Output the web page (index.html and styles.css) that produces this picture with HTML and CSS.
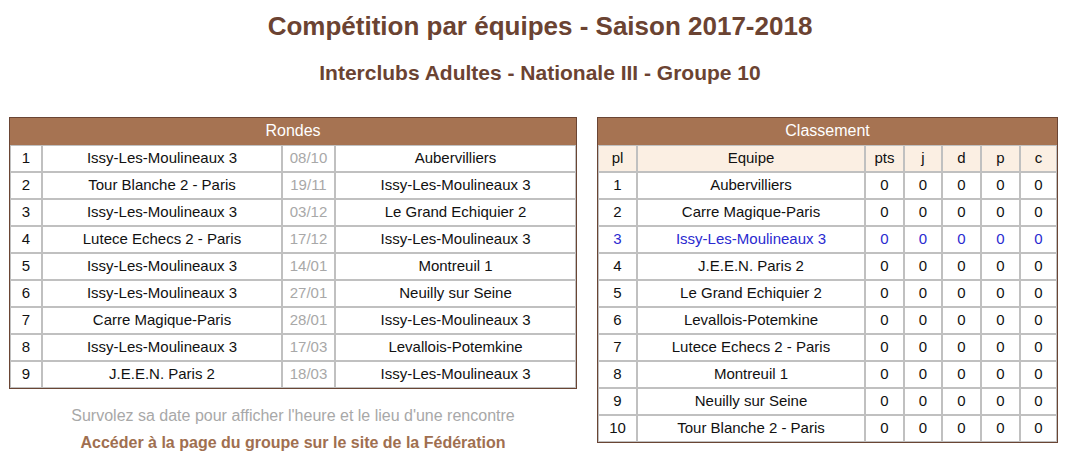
FILE: index.html
```html
<!DOCTYPE html>
<html lang="fr">
<head>
<meta charset="utf-8">
<title>Compétition par équipes</title>
<link rel="stylesheet" href="styles.css">
</head>
<body>
<header class="head">
  <h1 class="title">Compétition par équipes - Saison 2017-2018</h1>
  <h2 class="subtitle">Interclubs Adultes - Nationale III - Groupe 10</h2>
</header>
<main class="layout">
  <section class="col-left">
    <table class="grid rondes">
      <colgroup><col class="c-num"><col class="c-team"><col class="c-date"><col class="c-team2"></colgroup>
      <thead><tr><th colspan="4" class="cap">Rondes</th></tr></thead>
      <tbody>
        <tr><td>1</td><td>Issy-Les-Moulineaux 3</td><td class="date">08/10</td><td>Aubervilliers</td></tr>
        <tr><td>2</td><td>Tour Blanche 2 - Paris</td><td class="date">19/11</td><td>Issy-Les-Moulineaux 3</td></tr>
        <tr><td>3</td><td>Issy-Les-Moulineaux 3</td><td class="date">03/12</td><td>Le Grand Echiquier 2</td></tr>
        <tr><td>4</td><td>Lutece Echecs 2 - Paris</td><td class="date">17/12</td><td>Issy-Les-Moulineaux 3</td></tr>
        <tr><td>5</td><td>Issy-Les-Moulineaux 3</td><td class="date">14/01</td><td>Montreuil 1</td></tr>
        <tr><td>6</td><td>Issy-Les-Moulineaux 3</td><td class="date">27/01</td><td>Neuilly sur Seine</td></tr>
        <tr><td>7</td><td>Carre Magique-Paris</td><td class="date">28/01</td><td>Issy-Les-Moulineaux 3</td></tr>
        <tr><td>8</td><td>Issy-Les-Moulineaux 3</td><td class="date">17/03</td><td>Levallois-Potemkine</td></tr>
        <tr><td>9</td><td>J.E.E.N. Paris 2</td><td class="date">18/03</td><td>Issy-Les-Moulineaux 3</td></tr>
      </tbody>
    </table>
    <p class="hint">Survolez sa date pour afficher l'heure et le lieu d'une rencontre</p>
    <p class="fed">Accéder à la page du groupe sur le site de la Fédération</p>
  </section>
  <section class="col-right">
    <table class="grid classement">
      <colgroup><col class="k-pl"><col class="k-team"><col class="k-pts"><col class="k-j"><col class="k-d"><col class="k-p"><col class="k-c"></colgroup>
      <thead>
        <tr><th colspan="7" class="cap">Classement</th></tr>
        <tr class="sub"><th>pl</th><th>Equipe</th><th>pts</th><th>j</th><th>d</th><th>p</th><th>c</th></tr>
      </thead>
      <tbody>
        <tr><td>1</td><td>Aubervilliers</td><td>0</td><td>0</td><td>0</td><td>0</td><td>0</td></tr>
        <tr><td>2</td><td>Carre Magique-Paris</td><td>0</td><td>0</td><td>0</td><td>0</td><td>0</td></tr>
        <tr class="mine"><td>3</td><td>Issy-Les-Moulineaux 3</td><td>0</td><td>0</td><td>0</td><td>0</td><td>0</td></tr>
        <tr><td>4</td><td>J.E.E.N. Paris 2</td><td>0</td><td>0</td><td>0</td><td>0</td><td>0</td></tr>
        <tr><td>5</td><td>Le Grand Echiquier 2</td><td>0</td><td>0</td><td>0</td><td>0</td><td>0</td></tr>
        <tr><td>6</td><td>Levallois-Potemkine</td><td>0</td><td>0</td><td>0</td><td>0</td><td>0</td></tr>
        <tr><td>7</td><td>Lutece Echecs 2 - Paris</td><td>0</td><td>0</td><td>0</td><td>0</td><td>0</td></tr>
        <tr><td>8</td><td>Montreuil 1</td><td>0</td><td>0</td><td>0</td><td>0</td><td>0</td></tr>
        <tr><td>9</td><td>Neuilly sur Seine</td><td>0</td><td>0</td><td>0</td><td>0</td><td>0</td></tr>
        <tr><td>10</td><td>Tour Blanche 2 - Paris</td><td>0</td><td>0</td><td>0</td><td>0</td><td>0</td></tr>
      </tbody>
    </table>
  </section>
</main>
</body>
</html>
```
FILE: styles.css
```css
* { box-sizing: border-box; }
html, body { margin: 0; padding: 0; background: #fff; }
body {
  font-family: "Liberation Sans", Arial, sans-serif;
  color: #111;
  font-size: 15px;
}
.head {
  padding-left: 10px;
  text-align: center;
  color: #6b4332;
}
.title {
  margin: 0;
  padding-top: 11px;
  font-size: 26px;
  line-height: 30px;
  font-weight: bold;
}
.subtitle {
  margin: 0;
  padding-top: 20px;
  font-size: 21px;
  line-height: 24px;
  font-weight: bold;
}
.layout {
  display: flex;
  align-items: flex-start;
  gap: 20px;
  padding: 0 0 0 9px;
  margin-top: 32px;
}
.col-left { width: 568px; }
.col-right { width: 461px; }
.grid {
  width: 100%;
  table-layout: fixed;
  border-collapse: separate;
  border-spacing: 0;
  border: 1px solid #6a4534;
}
.grid td, .grid th {
  border: 1px solid #c0c0c0;
  padding: 3px 2px 5px;
  line-height: 17px;
  height: 27px;
  text-align: center;
  font-weight: normal;
  white-space: nowrap;
  overflow: hidden;
  font-size: 15px;
}
.grid th.cap {
  background: #a67352;
  border-color: #a67352;
  color: #fff;
  font-size: 16px;
}
.grid tr.sub th { background: #fbefe3; }
.grid td.date { color: #a8a8a8; }
.grid tr.mine td { color: #2a2ad0; }
.c-num { width: 32px; }
.c-team { width: 240px; }
.c-date { width: 53px; }
.c-team2 { width: 241px; }
.k-pl { width: 39px; }
.k-team { width: 228px; }
.k-pts { width: 39px; }
.k-j { width: 38px; }
.k-d { width: 39px; }
.k-p { width: 39px; }
.k-c { width: 37px; }
.hint {
  margin: 18px 0 0;
  text-align: center;
  font-size: 16px;
  line-height: 18px;
  color: #a8a8a8;
}
.fed {
  margin: 9px 0 0;
  text-align: center;
  font-size: 16px;
  line-height: 18px;
  font-weight: bold;
  color: #a06f50;
}
```
